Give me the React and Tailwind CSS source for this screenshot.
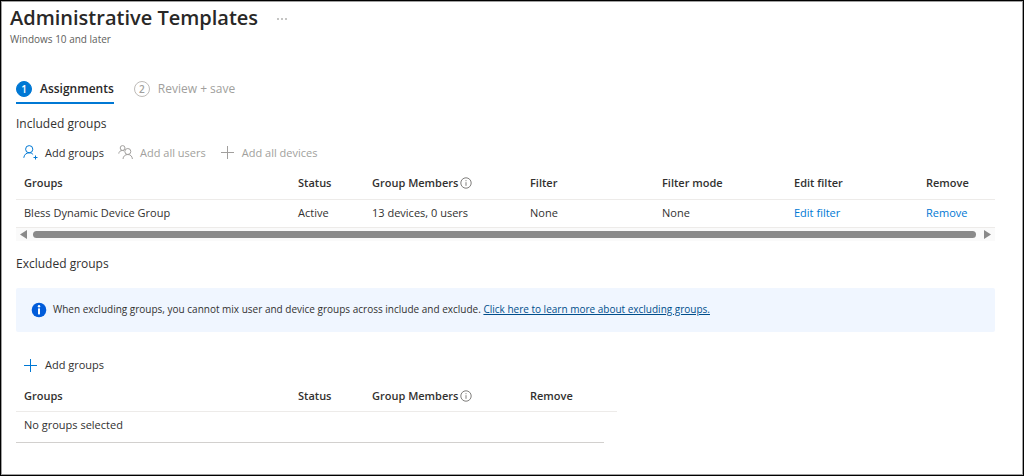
import { clsx } from "clsx";

const INCLUDED = [
  { name: "Bless Dynamic Device Group", status: "Active", members: "13 devices, 0 users", filter: "None", mode: "None" },
];

function PlusIcon({ color = "currentColor" }) {
  return (
    <svg className="size-4 shrink-0" viewBox="0 0 16 16" fill="none" stroke={color} aria-hidden="true">
      <path d="M7.5 1v13M1 7.5h13" />
    </svg>
  );
}

function AddUserIcon() {
  return (
    <svg className="size-4 shrink-0" viewBox="0 0 16 16" fill="none" stroke="#0078d4" aria-hidden="true">
      <circle cx="6.2" cy="4.2" r="3.600" />
      <path d="M.8 12.800c.3-3 2.400-5 5.400-5 1.600 0 2.900.6 3.900 1.700" />
      <path d="M12.500 10.500v4M10.500 12.500h4" />
    </svg>
  );
}

function UsersIcon() {
  return (
    <svg className="size-4 shrink-0" viewBox="0 0 16 16" fill="none" stroke="currentColor" aria-hidden="true">
      <circle cx="4.600" cy="3" r="2.400" />
      <path d="M.8 8.600c.1-1.900 1.500-3.100 3.700-3.100.6 0 1.100.1 1.600.3" />
      <circle cx="9.800" cy="6.500" r="3" />
      <path d="M5 14c.2-2.700 2.100-4.500 4.800-4.500s4.400 1.800 4.600 4.500" />
    </svg>
  );
}

function HintIcon() {
  return (
    <svg className="size-3 shrink-0" viewBox="0 0 12 12" fill="none" stroke="#605e5c" strokeWidth="0.8" aria-hidden="true">
      <circle cx="6" cy="6" r="5.200" />
      <path d="M6 5.200v3.600M6 3.200v1" />
    </svg>
  );
}

function InfoIcon() {
  return (
    <svg className="size-4 shrink-0" viewBox="0 0 16 16" aria-hidden="true">
      <circle cx="8" cy="8" r="7.300" fill="#015cda" />
      <circle cx="8" cy="4.200" r="1.200" fill="#fff" />
      <rect x="7" y="6.200" width="2" height="6.200" rx="0.600" fill="#fff" />
    </svg>
  );
}

function Step({ number, label, active }) {
  return (
    <button
      type="button"
      role="tab"
      aria-selected={active}
      className={clsx(
        "flex h-7 items-center gap-2 border-b-2 text-xs",
        active ? "border-[#0078d4] font-semibold text-[#292827]" : "border-transparent text-[#a19f9d]"
      )}
    >
      <span
        className={clsx(
          "flex size-4 items-center justify-center rounded-full border text-[10px] leading-3 font-semibold",
          active ? "border-[#0078d4] bg-[#0078d4] text-white" : "border-[#bebbb8] text-[#a19f9d]"
        )}
      >
        {number}
      </span>
      {label}
    </button>
  );
}

function ToolButton({ icon, label, disabled }) {
  return (
    <button
      type="button"
      disabled={disabled}
      className={clsx("flex h-[18px] items-center gap-1.5 text-[11px]", disabled ? "text-[#a19f9d]" : "text-[#323130]")}
    >
      {icon}
      {label}
    </button>
  );
}

function Th({ children, hint }) {
  return (
    <th scope="col" className="px-2 text-left font-semibold whitespace-nowrap">
      <span className="flex items-center gap-0.5">
        {children}
        {hint && <HintIcon />}
      </span>
    </th>
  );
}

function Td({ children }) {
  return <td className="px-2 whitespace-nowrap">{children}</td>;
}

export default function App() {
  return (
    <div className="min-h-screen border border-black bg-white font-['Open_Sans',sans-serif] text-[#323130] inset-ring inset-ring-[#a0a0a0]">
      <header className="px-[9px] pt-[3px]">
        <div className="flex items-center gap-4">
          <h1 className="text-xl leading-7 font-semibold text-[#292827]">Administrative Templates</h1>
          <button type="button" aria-label="More options" className="text-[#605e5c]">
            <svg className="h-4 w-4" viewBox="0 0 16 16" fill="currentColor" aria-hidden="true">
              <circle cx="4" cy="9" r="0.700" />
              <circle cx="8" cy="9" r="0.700" />
              <circle cx="12" cy="9" r="0.700" />
            </svg>
          </button>
        </div>
        <p className="mt-px text-[10px] leading-3 text-[#605e5c]">Windows 10 and later</p>
      </header>

      <main className="pt-[31px] pr-7 pl-[15px]">
        <div role="tablist" className="flex gap-5">
          <Step number={1} label="Assignments" active />
          <Step number={2} label="Review + save" active={false} />
        </div>

        <section>
          <h2 className="pt-3 text-xs leading-4">Included groups</h2>
          <div className="flex gap-3.5 px-[7px] pt-3">
            <ToolButton icon={<AddUserIcon />} label="Add groups" />
            <ToolButton icon={<UsersIcon />} label="Add all users" disabled />
            <ToolButton icon={<PlusIcon />} label="Add all devices" disabled />
          </div>
          <table className="mt-1.5 w-full table-fixed text-[11px]">
            <colgroup>
              <col className="w-[274px]" />
              <col className="w-[74px]" />
              <col className="w-[158px]" />
              <col className="w-[132px]" />
              <col className="w-[132px]" />
              <col className="w-[132px]" />
              <col className="w-[77px]" />
            </colgroup>
            <thead>
              <tr className="h-[31px] border-b border-[#edebe9]">
                <Th>Groups</Th>
                <Th>Status</Th>
                <Th hint>Group Members</Th>
                <Th>Filter</Th>
                <Th>Filter mode</Th>
                <Th>Edit filter</Th>
                <Th>Remove</Th>
              </tr>
            </thead>
            <tbody>
              {INCLUDED.map((g) => (
                <tr key={g.name} className="h-7 border-b border-[#edebe9]">
                  <Td>{g.name}</Td>
                  <Td>{g.status}</Td>
                  <Td>{g.members}</Td>
                  <Td>{g.filter}</Td>
                  <Td>{g.mode}</Td>
                  <Td><a href="#edit" className="text-[#0078d4]">Edit filter</a></Td>
                  <Td><a href="#remove" className="text-[#0078d4]">Remove</a></Td>
                </tr>
              ))}
            </tbody>
          </table>
          <div className="flex h-[13px] items-center gap-1.5 bg-[#fafafa] px-1">
            <svg className="h-[9px] w-[7px]" viewBox="0 0 7 9" fill="#8a8a8a" aria-hidden="true">
              <path d="M7 0v9L0 4.500z" />
            </svg>
            <div className="h-[7px] flex-1 rounded-full bg-[#8a8a8a]" />
            <svg className="ml-0.5 h-[9px] w-[7px]" viewBox="0 0 7 9" fill="#8a8a8a" aria-hidden="true">
              <path d="M0 0v9l7-4.500z" />
            </svg>
          </div>
        </section>

        <section>
          <h2 className="pt-[15px] text-xs leading-4">Excluded groups</h2>
          <div className="mt-4 flex min-h-11 items-center gap-1.5 rounded-xs bg-[#f0f6ff] px-[15px] text-[10px]">
            <InfoIcon />
            <p>
              When excluding groups, you cannot mix user and device groups across include and exclude.{" "}
              <a href="#learn" className="text-[#004e8c] underline">Click here to learn more about excluding groups.</a>
            </p>
          </div>
          <div className="flex px-[7px] pt-[25px]">
            <ToolButton icon={<PlusIcon color="#0078d4" />} label="Add groups" />
          </div>
          <table className="mt-1.5 w-[601px] max-w-full table-fixed text-[11px]">
            <colgroup>
              <col className="w-[274px]" />
              <col className="w-[74px]" />
              <col className="w-[158px]" />
              <col className="w-[95px]" />
            </colgroup>
            <thead>
              <tr className="h-[31px] border-b border-[#edebe9]">
                <Th>Groups</Th>
                <Th>Status</Th>
                <Th hint>Group Members</Th>
                <Th>Remove</Th>
              </tr>
            </thead>
            <tbody>
              <tr className="h-[26px]">
                <td colSpan={4} className="px-2">No groups selected</td>
              </tr>
            </tbody>
          </table>
          <div className="h-[5px] w-[588px] max-w-full border-b border-[#d2d0ce]" />
        </section>
      </main>
    </div>
  );
}
